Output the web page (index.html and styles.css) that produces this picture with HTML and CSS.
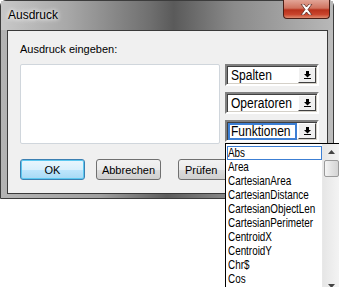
FILE: index.html
```html
<!DOCTYPE html>
<html lang="de">
<head>
    <meta charset="UTF-8">
    <title>Ausdruck</title>
    <link rel="stylesheet" href="styles.css">
</head>
<body>
    <div class="fenster">
        <div class="titel">
            <span class="titel-text">Ausdruck</span>
            <button class="schliessen" aria-label="Schließen">
                <svg width="13" height="11" viewBox="0 0 13 11">
                    <path d="M1 0 H4 L6.5 3 L9 0 H12 L8 5.5 L12 11 H9 L6.5 8 L4 11 H1 L5 5.5 Z" fill="#fff" stroke="#5a2a22" stroke-width="0.8"/>
                </svg>
            </button>
        </div>
        <div class="inhalt">
            <div class="label">Ausdruck eingeben:</div>
            <div class="zeile">
                <div class="eingabe"></div>
                <div class="auswahl">
                    <div class="combo">
                        <span class="combo-text"><span class="schmal">Spalten</span></span>
                        <span class="combo-knopf"><svg width="7" height="8" viewBox="0 0 7 8"><rect x="2" y="0" width="3" height="3" fill="#000"/><polygon points="0,3 7,3 3.5,6.5" fill="#000"/><rect x="0" y="7" width="7" height="1" fill="#000"/></svg></span>
                    </div>
                    <div class="combo">
                        <span class="combo-text"><span class="schmal">Operatoren</span></span>
                        <span class="combo-knopf"><svg width="7" height="8" viewBox="0 0 7 8"><rect x="2" y="0" width="3" height="3" fill="#000"/><polygon points="0,3 7,3 3.5,6.5" fill="#000"/><rect x="0" y="7" width="7" height="1" fill="#000"/></svg></span>
                    </div>
                    <div class="combo aktiv">
                        <span class="combo-text"><span class="schmal">Funktionen</span></span>
                        <span class="combo-knopf"><svg width="7" height="8" viewBox="0 0 7 8"><rect x="2" y="0" width="3" height="3" fill="#000"/><polygon points="0,3 7,3 3.5,6.5" fill="#000"/><rect x="0" y="7" width="7" height="1" fill="#000"/></svg></span>
                    </div>
                </div>
            </div>
            <div class="knoepfe">
                <button class="knopf standard">OK</button>
                <button class="knopf">Abbrechen</button>
                <button class="knopf pruefen">Prüfen</button>
            </div>
        </div>
    </div>

    <div class="liste">
        <ul class="eintraege">
            <li class="markiert"><span>Abs</span></li>
            <li><span>Area</span></li>
            <li><span>CartesianArea</span></li>
            <li><span>CartesianDistance</span></li>
            <li><span>CartesianObjectLen</span></li>
            <li><span>CartesianPerimeter</span></li>
            <li><span>CentroidX</span></li>
            <li><span>CentroidY</span></li>
            <li><span>Chr$</span></li>
            <li><span>Cos</span></li>
        </ul>
        <div class="scroll">
            <div class="pfeil"><svg width="7" height="4" viewBox="0 0 7 4"><polygon points="0,4 7,4 3.5,0" fill="#444"/></svg></div>
            <div class="daumen"></div>
            <div class="bahn"></div>
            <div class="pfeil"><svg width="7" height="4" viewBox="0 0 7 4"><polygon points="0,0 7,0 3.5,4" fill="#444"/></svg></div>
        </div>
    </div>
</body>
</html>
```

FILE: styles.css
```css
body{
    margin: 0;
    padding: 0;
    background: #fff;
    font-family: "Liberation Sans", Arial, sans-serif;
    font-size: 11px;
    position: relative;
    width: 339px;
    height: 287px;
    overflow: hidden;
}
.fenster{
    width: 332px;
    height: 197px;
    border: 1px solid #3c3c3c;
    border-radius: 6px 6px 0 0;
    background: linear-gradient(to right, #b4b4b4 0%, #a0a0a0 30%, #5c5c5c 50%, #8e8e8e 70%, #bdbdbd 100%);
    display: flex;
    flex-direction: column;
}
.titel{
    height: 29px;
    display: flex;
    align-items: flex-start;
    justify-content: space-between;
    background: linear-gradient(to right, #c8c8c8 0%, #a8a8a8 20%, #6f6f6f 45%, #5a5a5a 52%, #8a8a8a 70%, #b8b8b8 100%);
}
.titel-text{
    margin: 7px 0 0 7px;
    font-size: 12px;
    color: #000;
    text-shadow: 0 0 6px #fff, 0 0 4px #fff;
}
.schliessen{
    width: 47px;
    height: 19px;
    margin: -1px 3px 0 0;
    border: 1px solid #4a1e16;
    border-top: none;
    border-radius: 0 0 4px 4px;
    background: linear-gradient(to bottom, #e2a597 0%, #d0735f 45%, #b8321c 55%, #c9442c 80%, #de8a6e 100%);
    display: flex;
    align-items: center;
    justify-content: center;
    padding: 0;
}
.inhalt{
    flex: 1;
    margin: 0 5px 4px 6px;
    border: 1px solid #3a3a3a;
    background: #f0f0f0;
    padding: 12px 0 0 12px;
    display: flex;
    flex-direction: column;
}
.label{
    color: #000;
    height: 21px;
    line-height: 13px;
}
.zeile{
    display: flex;
    gap: 5px;
}
.eingabe{
    width: 198px;
    height: 78px;
    background: #fff;
    border: 1px solid #d0d6dc;
    border-radius: 2px;
}
.auswahl{
    display: flex;
    flex-direction: column;
    gap: 6px;
}
.combo{
    width: 94px;
    height: 22px;
    box-sizing: border-box;
    border: 2px solid;
    border-color: #808080 #ffffff #ffffff #808080;
    box-shadow: inset 1px 1px 0 #404040, inset -1px -1px 0 #d4d0c8;
    background: #fff;
    display: flex;
    align-items: stretch;
}
.combo-text{
    flex: 1;
    font-size: 14px;
    line-height: 17px;
    padding: 0 0 0 3px;
    margin: 1px 0 1px 1px;
    color: #000;
    white-space: nowrap;
    overflow: hidden;
}
.schmal{
    display: inline-block;
    transform: scaleX(0.86);
    transform-origin: left center;
}
.aktiv .combo-text{
    outline: 2px solid #3c7fd4;
    outline-offset: -1px;
    margin: 2px 1px 1px 2px;
    padding-left: 2px;
    line-height: 15px;
}
.combo-knopf{
    width: 16px;
    margin: 1px;
    background: #f0f0f0;
    border: 1px solid;
    border-color: #fff #404040 #404040 #fff;
    display: flex;
    align-items: center;
    justify-content: center;
}
.knoepfe{
    display: flex;
    gap: 11px;
    margin-top: 15px;
}
.knopf{
    width: 65px;
    height: 21px;
    font-family: "Liberation Sans", Arial, sans-serif;
    font-size: 11px;
    color: #000;
    border: 1px solid #707070;
    border-radius: 3px;
    background: linear-gradient(to bottom, #f2f2f2 0%, #ebebeb 50%, #dddddd 51%, #cfcfcf 100%);
    padding: 0;
}
.standard{
    border-color: #3c7fb1;
    background: linear-gradient(to bottom, #eaf6fd 0%, #d9f0fc 50%, #bee6fd 51%, #a7d9f5 100%);
    box-shadow: inset 0 0 0 1px #5cc8f0;
}
.pruefen{
    margin-left: 6px;
    text-align: left;
    padding-left: 6px;
}
.liste{
    position: absolute;
    left: 225px;
    top: 143px;
    width: 114px;
    height: 150px;
    background: #fff;
    border: 1px solid #000;
    border-right: none;
    display: flex;
}
.eintraege{
    list-style: none;
    margin: 0;
    padding: 2px 0 0 0;
    width: 96px;
    font-size: 13px;
}
.eintraege li{
    height: 14px;
    line-height: 14px;
    padding-left: 2px;
    white-space: nowrap;
    color: #000;
}
.eintraege li span{
    display: inline-block;
    transform: scaleX(0.76);
    transform-origin: left center;
}
.eintraege .markiert{
    outline: 1px solid #3c7fd4;
    outline-offset: -1px;
    padding-left: 1px;
    margin-left: 1px;
}
.scroll{
    width: 17px;
    display: flex;
    flex-direction: column;
    background: linear-gradient(to right, #e6e6e6, #f4f4f4);
    border-left: 1px solid #e8e8e8;
}
.pfeil{
    height: 16px;
    display: flex;
    align-items: center;
    justify-content: center;
}
.daumen{
    height: 15px;
    margin: 0 1px;
    border: 1px solid #9a9a9a;
    border-radius: 2px;
    background: linear-gradient(to right, #f4f4f4, #e2e2e2 50%, #d4d4d4);
}
.bahn{
    flex: 1;
}
```
